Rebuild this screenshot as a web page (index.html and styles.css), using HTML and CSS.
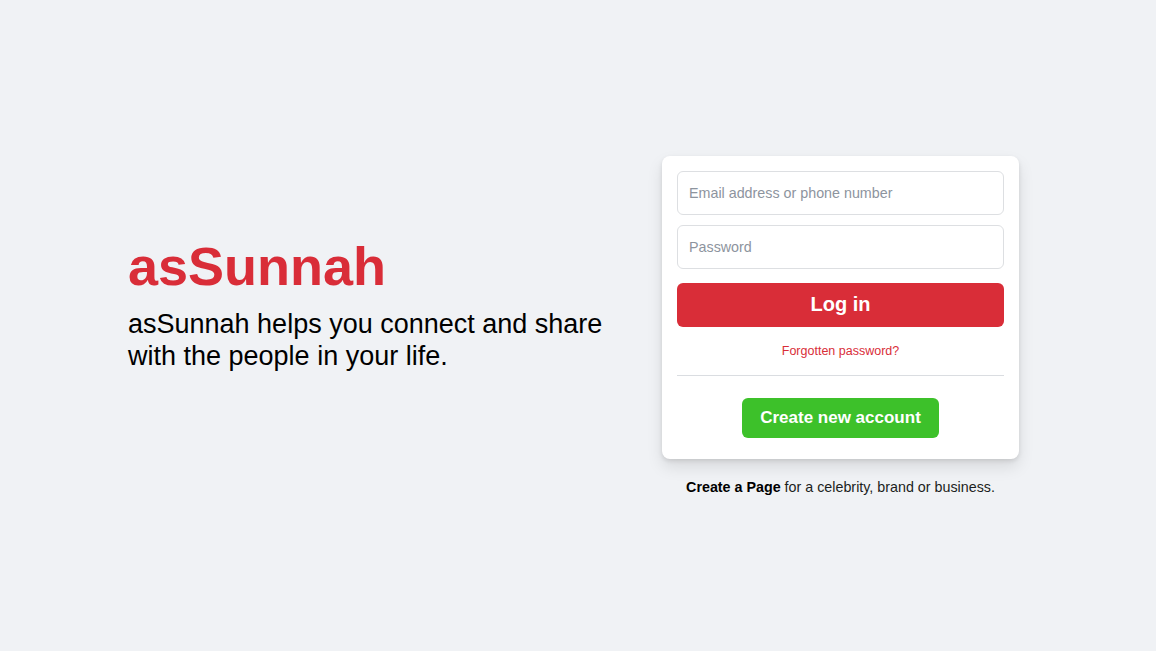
FILE: index.html
```html
<!DOCTYPE html>
<html lang="en">
<head>
<meta charset="utf-8">
<title>asSunnah - Log in or sign up</title>
<link rel="stylesheet" href="styles.css">
</head>
<body>
<div class="page">
  <div class="wrap">
    <div class="intro">
      <h1 class="brand">asSunnah</h1>
      <h2 class="tagline">asSunnah helps you connect and share with the people in your life.</h2>
    </div>
    <div class="side">
      <form class="card">
        <input class="field" type="text" placeholder="Email address or phone number">
        <input class="field" type="password" placeholder="Password">
        <button class="login" type="button">Log in</button>
        <a class="forgot" href="#">Forgotten password?</a>
        <div class="divider"></div>
        <div class="create-row">
          <button class="create" type="button">Create new account</button>
        </div>
      </form>
      <p class="page-note"><b>Create a Page</b> for a celebrity, brand or business.</p>
    </div>
  </div>
</div>
</body>
</html>
```
FILE: styles.css
```css
* { box-sizing: border-box; }
html, body { margin: 0; padding: 0; }
body {
  background: #f0f2f5;
  font-family: "Liberation Sans", Arial, Helvetica, sans-serif;
  color: #1c1e21;
}
.page {
  height: 651px;
  display: flex;
  align-items: center;
}
.wrap {
  width: 900px;
  margin: 0 auto;
  display: grid;
  grid-template-columns: 534px 357px;
  align-items: center;
}
.intro {
  padding-bottom: 45px;
}
.brand {
  margin: 0 0 11px;
  color: #d92d38;
  font-size: 54px;
  font-weight: bold;
  line-height: 62px;
}
.tagline {
  margin: 0;
  width: 500px;
  font-size: 27px;
  font-weight: normal;
  line-height: 32px;
  color: #000;
}
.side {
  display: flex;
  flex-direction: column;
  padding-bottom: 1px;
}
.card {
  background: #fff;
  border-radius: 8px;
  box-shadow: 0 2px 4px rgba(0,0,0,.1), 0 8px 16px rgba(0,0,0,.1);
  padding: 15px 15px 21px;
  display: flex;
  flex-direction: column;
}
.field {
  height: 44px;
  border: 1px solid #dddfe2;
  border-radius: 6px;
  padding: 0 11px;
  font-family: inherit;
  font-size: 14.3px;
  color: #1d2129;
  outline: none;
}
.field + .field { margin-top: 10px; }
.field::placeholder { color: #8d949e; }
.login {
  margin-top: 14px;
  height: 44px;
  border: none;
  border-radius: 6px;
  background: #d92d38;
  color: #fff;
  font-family: inherit;
  font-size: 20px;
  font-weight: bold;
}
.forgot {
  margin-top: 16px;
  align-self: center;
  color: #d92d38;
  font-size: 12.5px;
  line-height: 16px;
  text-decoration: none;
}
.divider {
  margin-top: 16px;
  border-top: 1px solid #dadde1;
}
.create-row {
  margin-top: 22px;
  display: flex;
  justify-content: center;
}
.create {
  height: 40px;
  padding: 0 18px;
  border: none;
  border-radius: 6px;
  background: #3dc12a;
  color: #fff;
  font-family: inherit;
  font-size: 17px;
  font-weight: bold;
}
.page-note {
  margin: 20px 0 0;
  text-align: center;
  font-size: 14.3px;
  line-height: 16px;
  color: #1c1e21;
}
.page-note b { color: #000; }
```
